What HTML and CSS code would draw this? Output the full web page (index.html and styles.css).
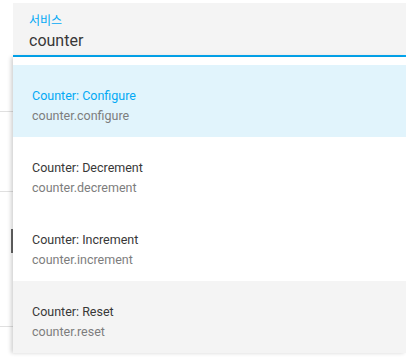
FILE: index.html
```html
<!DOCTYPE html>
<html lang="ko">
<head>
    <meta charset="UTF-8">
    <meta name="viewport" content="width=device-width, initial-scale=1.0">
    <title>서비스</title>
    <link rel="stylesheet" href="styles.css">
</head>
<body>
    <!-- page behind the popup -->
    <div class="page">
        <div class="row row-a"></div>
        <div class="row row-b"></div>
        <div class="row row-c"><span class="knob"></span></div>
        <div class="row row-d"><span class="knob"></span></div>
    </div>

    <div class="combo">
        <div class="field">
            <label class="field-label">서비스</label>
            <div class="field-value">counter</div>
        </div>
        <div class="dropdown">
            <div class="item selected">
                <div class="primary">Counter: Configure</div>
                <div class="secondary">counter.configure</div>
            </div>
            <div class="item">
                <div class="primary">Counter: Decrement</div>
                <div class="secondary">counter.decrement</div>
            </div>
            <div class="item">
                <div class="primary">Counter: Increment</div>
                <div class="secondary">counter.increment</div>
            </div>
            <div class="item hover">
                <div class="primary">Counter: Reset</div>
                <div class="secondary">counter.reset</div>
            </div>
        </div>
    </div>
</body>
</html>
```

FILE: styles.css
```css
html {
    overflow: hidden;
}

body {
    margin: 0;
    background: #ffffff;
    font-family: Roboto, "Noto Sans CJK KR", sans-serif;
    overflow: hidden;
    height: 357px;
    position: relative;
}

.page {
    width: 13px;
}

.row {
    border-bottom: 1px solid #e0e0e0;
    box-sizing: border-box;
}

.row-a { height: 112px; }
.row-b { height: 80px; }
.row-c { height: 98px; }
.row-d { height: 67px; border-bottom: none; }

.knob {
    display: block;
    width: 2px;
    height: 24px;
    background: #666;
    margin-left: 11px;
}

.row-c .knob { margin-top: 37px; }
.row-d .knob { margin-top: 36px; }

.combo {
    position: absolute;
    top: 3px;
    left: 13px;
    right: 0;
}

.field {
    background: #f4f4f4;
    height: 54px;
    padding: 11px 16px 0;
    box-sizing: border-box;
    border-bottom: 2px solid #03a9f4;
}

.field-label {
    display: block;
    font-size: 12px;
    line-height: 14px;
    color: #03a9f4;
}

.field-value {
    font-size: 16px;
    line-height: 22px;
    color: #383838;
    margin-top: 2px;
}

.dropdown {
    background: #ffffff;
    padding: 8px 0 0;
    box-shadow: -2px 0 4px rgba(0, 0, 0, 0.18);
}

.item {
    height: 72px;
    box-sizing: border-box;
    padding: 23px 19px 0;
}

.item.selected {
    background: #e1f4fc;
}

.item.hover {
    background: #f4f4f4;
}

.primary {
    font-size: 12.5px;
    line-height: 16px;
    color: #383838;
}

.selected .primary {
    color: #03a9f4;
}

.secondary {
    font-size: 12.5px;
    line-height: 16px;
    margin-top: 4px;
    color: #7d7d7d;
}
```
